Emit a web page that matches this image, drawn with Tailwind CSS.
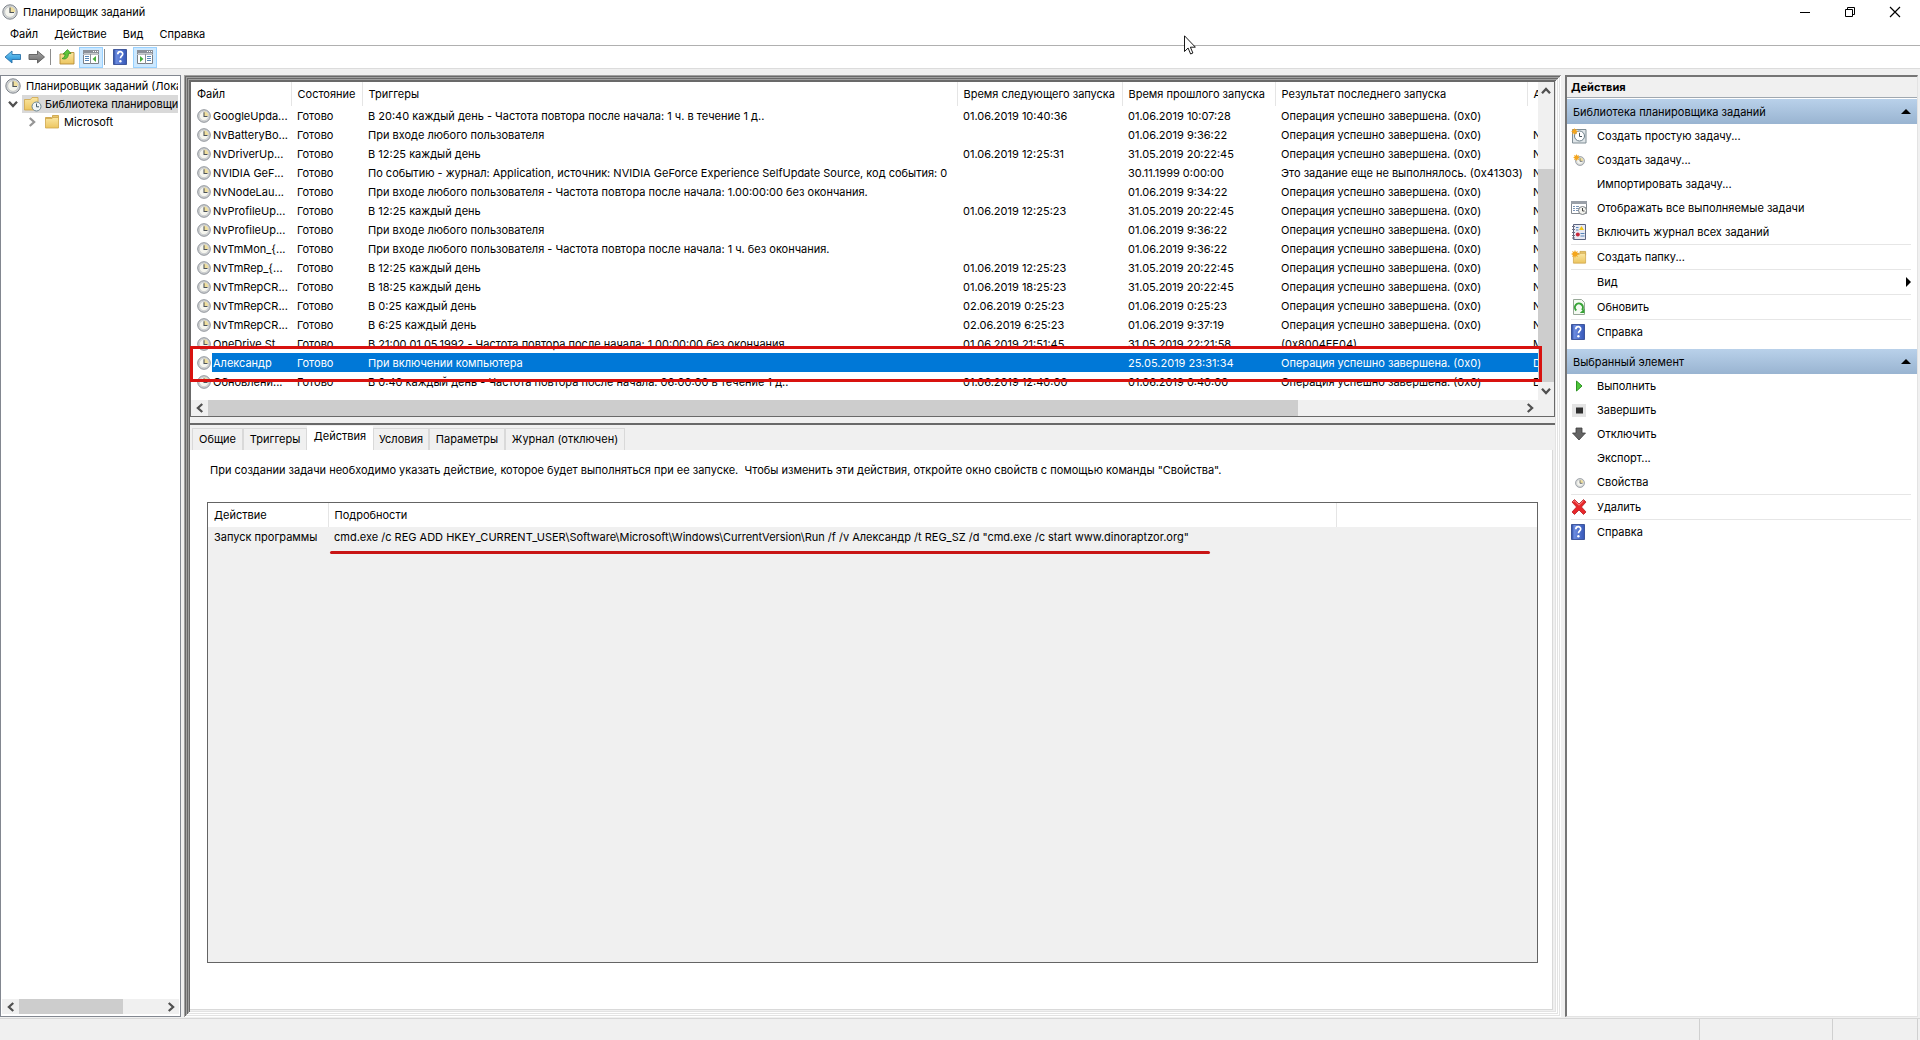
<!DOCTYPE html>
<html lang="ru">
<head>
<meta charset="utf-8">
<meta name="viewport" content="width=device-width, initial-scale=1">
<title>Планировщик заданий</title>
<script src="https://cdn.jsdelivr.net/npm/@tailwindcss/browser@4"></script>
</head>
<body class="flex min-h-screen flex-col overflow-x-hidden bg-[#f0f0f0] font-['Inter','Noto_Sans',sans-serif] text-[11px] leading-4 text-black">

<svg class="absolute size-0" aria-hidden="true">
  <defs>
    <linearGradient id="gFolder" x1="0" y1="0" x2="0" y2="1"><stop offset="0" stop-color="#fbe7a2"/><stop offset="1" stop-color="#ecc55f"/></linearGradient>
    <linearGradient id="gBlue" x1="0" y1="0" x2="0" y2="1"><stop offset="0" stop-color="#7fd3f7"/><stop offset="1" stop-color="#1583cf"/></linearGradient>
    <linearGradient id="gGrey" x1="0" y1="0" x2="0" y2="1"><stop offset="0" stop-color="#a8a8a8"/><stop offset="1" stop-color="#6c6c6c"/></linearGradient>
    <linearGradient id="gHelp" x1="0" y1="0" x2="1" y2="0"><stop offset="0" stop-color="#24459c"/><stop offset=".2" stop-color="#6b8be0"/><stop offset="1" stop-color="#3557b8"/></linearGradient>
    <symbol id="clock" viewBox="0 0 16 16">
      <circle cx="8" cy="8" r="7.2" fill="#d4d6d8" stroke="#7f858b"/>
      <circle cx="8" cy="8" r="5.3" fill="#f5f5ee" stroke="#b4b8bb" stroke-width=".6"/>
      <path d="M8 8V2.8A5.2 5.2 0 0 1 13.2 8z" fill="#efdf9f"/>
      <path d="M8 3.6V8.5H12" fill="none" stroke="#4d5358" stroke-width="1.2"/>
    </symbol>
    <symbol id="folder" viewBox="0 0 16 16">
      <path d="M1.5 3.5h6v2h-6zM8.5 1.500h6v4h-6z" fill="#e9c56b" stroke="#c79d3e" stroke-width=".8"/>
      <path d="M1.500 4.500h6.500l1-1h5.500v10.500h-13z" fill="url(#gFolder)" stroke="#cfa64a" stroke-width=".8"/>
    </symbol>
    <symbol id="help" viewBox="0 0 14 16">
      <path d="M.5 .5h13v15h-13z" fill="url(#gHelp)" stroke="#27408b" stroke-width=".8"/>
      <path d="M4.800 5.200c0-3.400 5-3.200 4.900-.2 0 2-2.200 2-2.200 4.300" fill="none" stroke="#fff" stroke-width="1.700"/>
      <circle cx="7.400" cy="12.300" r="1.200" fill="#fff"/>
    </symbol>
    <symbol id="star" viewBox="0 0 8 8">
      <path d="M4 0l.9 2L7 1l-1 2.100L8 4l-2 .9L7 7l-2.100-1L4 8l-.9-2L1 7l1-2.100L0 4l2-.9L1 1l2.100 1z" fill="#f4a51c"/>
    </symbol>
    <symbol id="left" viewBox="0 0 8 8"><path d="M5.800 .8L2.300 4l3.500 3.200" fill="none" stroke="#505050" stroke-width="1.800"/></symbol>
    <symbol id="right" viewBox="0 0 8 8"><path d="M2.200 .8L5.700 4 2.200 7.200" fill="none" stroke="#505050" stroke-width="1.800"/></symbol>
    <symbol id="up" viewBox="0 0 8 8"><path d="M.8 5.800L4 2.300l3.200 3.500" fill="none" stroke="#505050" stroke-width="1.800"/></symbol>
    <symbol id="down" viewBox="0 0 8 8"><path d="M.8 2.200L4 5.700l3.200-3.500" fill="none" stroke="#505050" stroke-width="1.800"/></symbol>
  </defs>
</svg>

<header class="bg-white">
  <div class="flex h-[23px] items-center pl-0.5">
    <svg class="size-4"><use href="#clock"/></svg>
    <h1 class="ml-[5px] flex-1">Планировщик заданий</h1>
    <div class="flex h-5">
      <button class="flex w-[45px] items-center justify-center" aria-label="Свернуть"><svg class="size-2.5" viewBox="0 0 10 10"><path d="M0 5.500h10" stroke="#000"/></svg></button>
      <button class="flex w-[45px] items-center justify-center" aria-label="Восстановить"><svg class="size-2.5" viewBox="0 0 10 10"><path d="M.5 2.500h7v7h-7zM2.500 2.500v-2h7v7h-2" fill="none" stroke="#000"/></svg></button>
      <button class="mr-[3px] flex w-[45px] items-center justify-center" aria-label="Закрыть"><svg class="size-3" viewBox="0 0 12 12"><path d="M1 1l10 10M11 1L1 11" stroke="#000" stroke-width="1.200"/></svg></button>
    </div>
  </div>
  <nav class="flex h-[23px] items-center gap-4 border-b border-[#b0b0b0] pb-px pl-2.5">
    <button>Файл</button><button>Действие</button><button>Вид</button><button>Справка</button>
  </nav>
  <div class="flex h-[23px] items-center border-b border-[#dcdcdc] pl-1">
    <button aria-label="Назад"><svg class="h-4 w-[18px]" viewBox="0 0 18 16"><path d="M1 8l7-6v3.500h8.500v5H8V14z" fill="url(#gBlue)" stroke="#2a72a8" stroke-width=".9"/></svg></button>
    <button class="ml-1.5" aria-label="Вперёд"><svg class="h-4 w-[18px]" viewBox="0 0 18 16"><path d="M16.500 8l-7-6v3.500H1v5h8.500V14z" fill="url(#gGrey)" stroke="#5c5c5c" stroke-width=".9"/></svg></button>
    <span class="mx-1 h-4 w-px bg-[#8d8d8d]"></span>
    <button class="flex w-6 justify-center" aria-label="Вверх"><svg class="size-4" viewBox="0 0 16 16"><path d="M1 5h6l1.500-1.500H15v11.500H1z" fill="url(#gFolder)" stroke="#b58d38" stroke-width=".9"/><path d="M3 9.500C5 9 6 7.500 6 5H4l4.500-4.500L12 4.500H9.500C9.500 9 6.500 11 3 9.500z" fill="#5fc43a" stroke="#2f8a1e" stroke-width=".7"/></svg></button>
    <button class="flex h-[21px] w-6 items-center justify-center border border-[#99d1ff] bg-[#cce8ff]" aria-label="Дерево консоли"><svg class="size-4 shrink-0" viewBox="0 0 16 16"><path d="M.5 1.500h15v13H.5z" fill="#fff" stroke="#7b7f86"/><path d="M0 1h16v3.500H0z" fill="#8b9099"/><path d="M10 2.500h1M12 2.500h1M14 2.500h1" stroke="#fff"/><path d="M0 5.500h16" stroke="#b9bcc2"/><path d="M2 7.500h4M2 9.500h4M2 11.500h4" stroke="#5686b8"/><path d="M7.500 5v10" stroke="#8b9099"/><path d="M13 7v6l-3.500-3z" fill="#45ad3a"/></svg></button>
    <span class="mx-px h-4 w-px bg-[#8d8d8d]"></span>
    <button class="mr-px ml-0.5 flex w-6 justify-center" aria-label="Справка"><svg class="h-4 w-3.5"><use href="#help"/></svg></button>
    <button class="flex h-[21px] w-6 items-center justify-center border border-[#99d1ff] bg-[#cce8ff]" aria-label="Панель действий"><svg class="size-4 shrink-0" viewBox="0 0 16 16"><path d="M.5 1.500h15v13H.5z" fill="#fff" stroke="#7b7f86"/><path d="M0 1h16v3.500H0z" fill="#8b9099"/><path d="M10 2.500h1M12 2.500h1M14 2.500h1" stroke="#fff"/><path d="M0 5.500h16" stroke="#b9bcc2"/><path d="M10 7.500h4M10 9.500h4M10 11.500h4" stroke="#5686b8"/><path d="M8.500 5v10" stroke="#8b9099"/><path d="M3 7v6l3.500-3z" fill="#45ad3a"/></svg></button>
  </div>
</header>

<main class="flex flex-1 pt-1.5">

  <!-- Дерево консоли -->
  <aside class="flex w-[181px] shrink-0 flex-col border border-[#828790] bg-white">
    <ul class="mr-0.5 flex-1 overflow-hidden whitespace-nowrap pt-px">
      <li class="flex h-[18px] items-center gap-[5px] pl-1"><svg class="size-4 shrink-0"><use href="#clock"/></svg><span>Планировщик заданий (Локальный)</span></li>
      <li class="flex h-[18px] items-center pl-[7px]">
        <svg class="size-2.5 shrink-0"><use href="#down"/></svg>
        <span class="ml-1 flex h-[18px] flex-1 items-center gap-[3px] bg-[#d9d9d9] pl-0.5">
          <svg class="h-4 w-[18px] shrink-0" viewBox="0 0 18 16"><path d="M.5 3.500h6l1.500-2h6v12.500H.5z" fill="url(#gFolder)" stroke="#cfa64a" stroke-width=".8"/><circle cx="12.500" cy="10.500" r="4.500" fill="#f1f5f6" stroke="#6f8894"/><path d="M12.500 7.500v3.300h2.500" fill="none" stroke="#445a66"/></svg>
          <span>Библиотека планировщика заданий</span>
        </span>
      </li>
      <li class="flex h-[18px] items-center pl-[26px]"><svg class="mr-[7px] size-2.5 shrink-0 opacity-60"><use href="#right"/></svg><svg class="mr-1 size-4 shrink-0"><use href="#folder"/></svg><span>Microsoft</span></li>
    </ul>
    <div class="mx-px mb-0.5 flex h-[15px] items-center">
      <div class="flex h-full w-[17px] items-center justify-center bg-[#f0f0f0]"><svg class="size-2.5"><use href="#left"/></svg></div>
      <div class="h-full flex-1 bg-[#f0f0f0]"><div class="h-full w-[104px] bg-[#cdcdcd]"></div></div>
      <div class="flex h-full w-[17px] items-center justify-center bg-[#f0f0f0]"><svg class="size-2.5"><use href="#right"/></svg></div>
    </div>
  </aside>

  <!-- Список заданий и сведения о выбранном -->
  <section class="ml-[3px] flex min-w-0 flex-1 flex-col p-1.5 shadow-[inset_1px_1px_#a0a0a0,inset_-1px_-1px_#ffffff,inset_2px_2px_#696969,inset_-2px_-2px_#e3e3e3,inset_3px_3px_#a0a0a0,inset_-3px_-3px_#ffffff,inset_4px_4px_#696969,inset_-4px_-4px_#e3e3e3,inset_5px_5px_#a0a0a0,inset_-5px_-5px_#ffffff,inset_6px_6px_#696969,inset_-6px_-6px_#e3e3e3]">
    <div class="relative border border-[#696969] bg-white">
      <div class="flex">
        <div class="min-w-0 flex-1 overflow-hidden pb-[9px]">
          <table class="w-full table-fixed border-collapse whitespace-nowrap text-left">
            <colgroup><col class="w-[100px]"><col class="w-[71px]"><col><col class="w-[165px]"><col class="w-[153px]"><col class="w-[252px]"><col class="w-[11px]"></colgroup>
            <thead>
              <tr class="h-6">
                <th class="overflow-hidden border-r border-[#e5e5e5] p-0 pl-1.5 font-normal">Файл</th>
                <th class="overflow-hidden border-r border-[#e5e5e5] p-0 pl-1.5 font-normal">Состояние</th>
                <th class="overflow-hidden border-r border-[#e5e5e5] p-0 pl-1.5 font-normal">Триггеры</th>
                <th class="overflow-hidden border-r border-[#e5e5e5] p-0 pl-1.5 font-normal">Время следующего запуска</th>
                <th class="overflow-hidden border-r border-[#e5e5e5] p-0 pl-1.5 font-normal">Время прошлого запуска</th>
                <th class="overflow-hidden border-r border-[#e5e5e5] p-0 pl-1.5 font-normal">Результат последнего запуска</th>
                <th class="overflow-hidden p-0 pl-1.5 font-normal">Автор</th>
              </tr>
            </thead>
            <tbody id="tasks"></tbody>
          </table>
        </div>
        <div class="flex w-4 flex-col bg-[#f0f0f0]">
          <div class="flex h-[18px] items-center justify-center"><svg class="size-2.5"><use href="#up"/></svg></div>
          <div class="flex-1"></div>
          <div class="h-[213px] bg-[#cdcdcd]"></div>
          <div class="flex h-[18px] items-center justify-center"><svg class="size-2.5"><use href="#down"/></svg></div>
        </div>
      </div>
      <div class="flex h-4 items-center bg-[#f0f0f0] pr-4">
        <div class="flex w-[17px] justify-center"><svg class="size-2.5"><use href="#left"/></svg></div>
        <div class="h-full flex-1"><div class="h-full w-[83%] bg-[#cdcdcd]"></div></div>
        <div class="flex w-[17px] justify-center"><svg class="size-2.5"><use href="#right"/></svg></div>
      </div>
      <!-- Красная рамка вокруг подозрительного задания -->
      <div class="pointer-events-none absolute top-[264px] right-3 -left-px h-9 border-3 border-[#d8120f]"></div>
    </div>

    <div class="mt-1.5 flex flex-1 flex-col border-t-2 border-[#696969]">
      <div role="tablist" class="flex items-end pt-px pl-0.5">
        <button role="tab" class="h-[22px] w-[51px] border border-b-0 border-[#d9d9d9] pb-0.5">Общие</button>
        <button role="tab" class="h-[22px] w-16 border border-b-0 border-[#d9d9d9] pb-0.5">Триггеры</button>
        <button role="tab" aria-selected="true" class="h-6 w-[66px] bg-white pb-1">Действия</button>
        <button role="tab" class="h-[22px] w-14 border border-b-0 border-[#d9d9d9] pb-0.5">Условия</button>
        <button role="tab" class="h-[22px] w-[76px] border border-b-0 border-[#d9d9d9] pb-0.5">Параметры</button>
        <button role="tab" class="h-[22px] w-[120px] border border-b-0 border-[#d9d9d9] pb-0.5">Журнал (отключен)</button>
      </div>
      <div role="tabpanel" class="mr-0.5 mb-px flex flex-1 flex-col border-r border-b border-[#d9d9d9] bg-white pt-3 pr-3.5 pb-[46px] pl-[17px]">
        <p class="pl-[3px] whitespace-pre-wrap">При создании задачи необходимо указать действие, которое будет выполняться при ее запуске.  Чтобы изменить эти действия, откройте окно свойств с помощью команды "Свойства".</p>
        <div class="mt-6 flex-1 border border-[#646464] bg-[#f0f0f0]">
          <table class="w-full table-fixed border-collapse text-left whitespace-nowrap">
            <colgroup><col class="w-[120px]"><col><col class="w-[201px]"></colgroup>
            <thead><tr class="h-6 bg-white">
              <th class="border-r border-[#e5e5e5] p-0 pl-1.5 font-normal">Действие</th>
              <th class="border-r border-[#e5e5e5] p-0 pl-1.5 font-normal">Подробности</th>
              <th class="p-0"></th>
            </tr></thead>
            <tbody><tr class="h-5">
              <td class="p-0 pl-1.5">Запуск программы</td>
              <td class="p-0 pl-0.5"><span class="relative inline-block pr-1.5 pl-1">cmd.exe /c REG ADD HKEY_CURRENT_USER\Software\Microsoft\Windows\CurrentVersion\Run /f /v Александр /t REG_SZ /d "cmd.exe /c start www.dinoraptzor.org"<span class="absolute top-[22px] left-0 h-[3px] w-full min-w-[880px] rounded-full bg-[#c81414]"></span></span></td>
              <td class="p-0"></td>
            </tr></tbody>
          </table>
        </div>
      </div>
    </div>
  </section>

  <!-- Панель действий -->
  <aside class="mr-0.5 ml-1 w-[353px] shrink-0 border-t-2 border-r border-b border-l-2 border-t-[#757575] border-r-[#e3e3e3] border-b-[#e3e3e3] border-l-[#757575] bg-white">
    <h2 class="flex h-[21px] items-center border-b border-[#a0a8b0] bg-[#f0f0f0] pl-1 font-bold">Действия</h2>
    <div id="actions" class="pt-px"></div>
  </aside>
</main>

<footer class="mt-px flex h-[22px] border-t border-[#d7d7d7]">
  <div class="flex-1"></div>
  <div class="w-[133px] border-l border-[#d0d0d0]"></div>
  <div class="mr-0.5 w-[86px] border-x border-[#d0d0d0]"></div>
</footer>

<!-- Указатель мыши -->
<svg class="pointer-events-none absolute top-[35px] left-[1184px] h-5 w-3" viewBox="0 0 12 20"><path d="M.5 .8v15.700l3.600-3.500 2.500 6 2.300-1-2.500-5.800h5z" fill="#fff" stroke="#000" stroke-width=".9"/></svg>

<script>
const ok = 'Операция успешно завершена. (0x0)';
const tasks = [
  ['GoogleUpda...', 'В 20:40 каждый день - Частота повтора после начала: 1 ч. в течение 1 д..', '01.06.2019 10:40:36', '01.06.2019 10:07:28', ok, ''],
  ['NvBatteryBo...', 'При входе любого пользователя', '', '01.06.2019 9:36:22', ok, 'N'],
  ['NvDriverUp...', 'В 12:25 каждый день', '01.06.2019 12:25:31', '31.05.2019 20:22:45', ok, 'N'],
  ['NVIDIA GeF...', 'По событию - журнал: Application, источник: NVIDIA GeForce Experience SelfUpdate Source, код события: 0', '', '30.11.1999 0:00:00', 'Это задание еще не выполнялось. (0x41303)', 'N'],
  ['NvNodeLau...', 'При входе любого пользователя - Частота повтора после начала: 1.00:00:00 без окончания.', '', '01.06.2019 9:34:22', ok, 'N'],
  ['NvProfileUp...', 'В 12:25 каждый день', '01.06.2019 12:25:23', '31.05.2019 20:22:45', ok, 'N'],
  ['NvProfileUp...', 'При входе любого пользователя', '', '01.06.2019 9:36:22', ok, 'N'],
  ['NvTmMon_{...', 'При входе любого пользователя - Частота повтора после начала: 1 ч. без окончания.', '', '01.06.2019 9:36:22', ok, 'N'],
  ['NvTmRep_{...', 'В 12:25 каждый день', '01.06.2019 12:25:23', '31.05.2019 20:22:45', ok, 'N'],
  ['NvTmRepCR...', 'В 18:25 каждый день', '01.06.2019 18:25:23', '31.05.2019 20:22:45', ok, 'N'],
  ['NvTmRepCR...', 'В 0:25 каждый день', '02.06.2019 0:25:23', '01.06.2019 0:25:23', ok, 'N'],
  ['NvTmRepCR...', 'В 6:25 каждый день', '02.06.2019 6:25:23', '01.06.2019 9:37:19', ok, 'N'],
  ['OneDrive St...', 'В 21:00 01.05.1992 - Частота повтора после начала: 1.00:00:00 без окончания.', '01.06.2019 21:51:45', '31.05.2019 22:21:58', '(0x8004EE04)', 'M'],
  ['Александр', 'При включении компьютера', '', '25.05.2019 23:31:34', ok, 'D'],
  ['Обновлени...', 'В 0:40 каждый день - Частота повтора после начала: 06:00:00 в течение 1 д..', '01.06.2019 12:40:00', '01.06.2019 0:40:00', ok, 'D'],
];
document.getElementById('tasks').innerHTML = tasks.map(([name, ...rest]) => {
  const on = name === 'Александр';
  const sel = on ? 'bg-[#0078d7] text-white' : '';
  const cells = ['Готово', ...rest].map(t => `<td class="overflow-hidden p-0 pl-1.5 ${sel}">${t}</td>`).join('');
  return `<tr class="h-[19px]"><td class="overflow-hidden p-0 pl-1.5"><div class="flex h-[19px] items-center"><svg class="mr-px size-3.5 shrink-0"><use href="#clock"/></svg><span class="flex h-[19px] flex-1 items-center pl-px ${sel}">${name}</span></div></td>${cells}</tr>`;
}).join('');

const svg = (box, body) => `<svg class="size-4" viewBox="${box}">${body}</svg>`;
const icon = {
  simple: svg('0 0 16 16', '<path d="M1.500 1.500h13.500v13.500H1.500z" fill="#dfe5e8" stroke="#7f8c94"/><circle cx="8.500" cy="8" r="5" fill="#fff" stroke="#6c7f8a"/><path d="M8.500 4.800V8.500H11" fill="none" stroke="#44525a"/><use href="#star" width="7" height="7"/>'),
  task: svg('0 0 16 16', '<use href="#clock" x="4" y="4" width="10" height="10"/><use href="#star" x="2" y="2" width="7" height="7"/>'),
  running: svg('0 0 16 16', '<path d="M.5 1.500h15v12H.5z" fill="#fff" stroke="#84898f"/><path d="M0 1h16v3H0z" fill="#9aa0a8"/><path d="M2 6.500h2M5 6.500h3M2 8.500h2M5 8.500h3M2 10.500h2M5 10.500h3" stroke="#7c95b5"/><circle cx="11.500" cy="10.500" r="4" fill="#f3f3ee" stroke="#7b8085"/><path d="M11.500 8v3h2" fill="none" stroke="#444"/>'),
  journal: svg('0 0 16 16', '<path d="M2.500 .5h12v15h-12z" fill="#e8eaf4" stroke="#5c6580"/><path d="M1 2.500h3M1 5.500h3M1 8.500h3M1 11.500h3M1 14h3" stroke="#6e6e80"/><path d="M10.500 2l2.500 4H8z" fill="#f0c419"/><path d="M5 3.500h2.500M5 6h2.500M9.500 9.500h4M9.500 12h4" stroke="#5686b8"/><circle cx="6.800" cy="10.500" r="2" fill="#c8283c"/>'),
  folder: svg('0 0 16 16', '<use href="#folder" x="1" y="1" width="15" height="15"/><use href="#star" x="0" y="1" width="8" height="8"/>'),
  refresh: svg('0 0 16 16', '<path d="M2.500 .5h8l3 3v12h-11z" fill="#f4faf2" stroke="#97a897"/><path d="M5.300 11.500A4 4 0 1 1 11 11" fill="none" stroke="#36a336" stroke-width="2"/><path d="M13.500 9.500v4.500H8.800z" fill="#36a336"/>'),
  help: svg('0 0 16 16', '<use href="#help" width="14" height="16"/>'),
  run: svg('0 0 16 16', '<path d="M5.500 3l5.500 5-5.500 5z" fill="#4fc63a" stroke="#2c9422"/>'),
  stop: svg('0 0 16 16', '<path d="M1 2h14v13H1z" fill="#e4e4e4"/><path d="M5 5.500h7v6H5z" fill="#2f2f2f"/>'),
  disable: svg('0 0 16 16', '<path d="M5 2h6v5h3.500L8 14 1.500 7H5z" fill="#646464" stroke="#3d3d3d" stroke-width=".8"/>'),
  props: svg('0 0 16 16', '<use href="#clock" x="4" y="4" width="10" height="10"/>'),
  remove: svg('0 0 16 16', '<path d="M1 3l2.500-2.500L8 5l4.500-4.500L15 3l-4.500 5L15 13l-2.500 2.500L8 11l-4.500 4.500L1 13l4.500-5z" fill="#e8262a" stroke="#ad1015" stroke-width=".7"/><path d="M2.300 3l1.200-1.200L8 6.200l4.500-4.400" fill="none" stroke="#f89090"/>'),
  none: ''
};
// В каждой группе пункты разделены на подгруппы линиями
const groups = [
  ['Библиотека планировщика заданий', [
    [['simple', 'Создать простую задачу...'], ['task', 'Создать задачу...'], ['none', 'Импортировать задачу...'], ['running', 'Отображать все выполняемые задачи'], ['journal', 'Включить журнал всех заданий']],
    [['folder', 'Создать папку...']], [['none', 'Вид', true]], [['refresh', 'Обновить']], [['help', 'Справка']]]],
  ['Выбранный элемент', [
    [['run', 'Выполнить'], ['stop', 'Завершить'], ['disable', 'Отключить'], ['none', 'Экспорт...'], ['props', 'Свойства']],
    [['remove', 'Удалить']], [['help', 'Справка']]]]
];
const arrow = '<svg class="h-2.5 w-[5px]" viewBox="0 0 5 10"><path d="M0 0l5 5-5 5z"/></svg>';
document.getElementById('actions').innerHTML = groups.map(([title, parts]) =>
  `<section class="mb-[5px]"><h3 class="flex h-[25px] items-center justify-between bg-linear-to-b from-[#b9d1ea] to-[#99b4d1] pr-1.5 pl-1.5">${title}<svg class="h-[5px] w-2.5" viewBox="0 0 10 5"><path d="M0 5l5-5 5 5z"/></svg></h3><div class="divide-y divide-[#e6e6e6] pr-1.5 pl-1">` +
  parts.map(items => '<div>' + items.map(([i, label, more]) =>
    `<button class="flex h-6 w-full items-center text-left"><span class="mr-2.5 size-4">${icon[i]}</span><span class="flex-1">${label}</span>${more ? arrow : ''}</button>`).join('') + '</div>').join('') +
  '</div></section>').join('');
</script>
</body>
</html>
